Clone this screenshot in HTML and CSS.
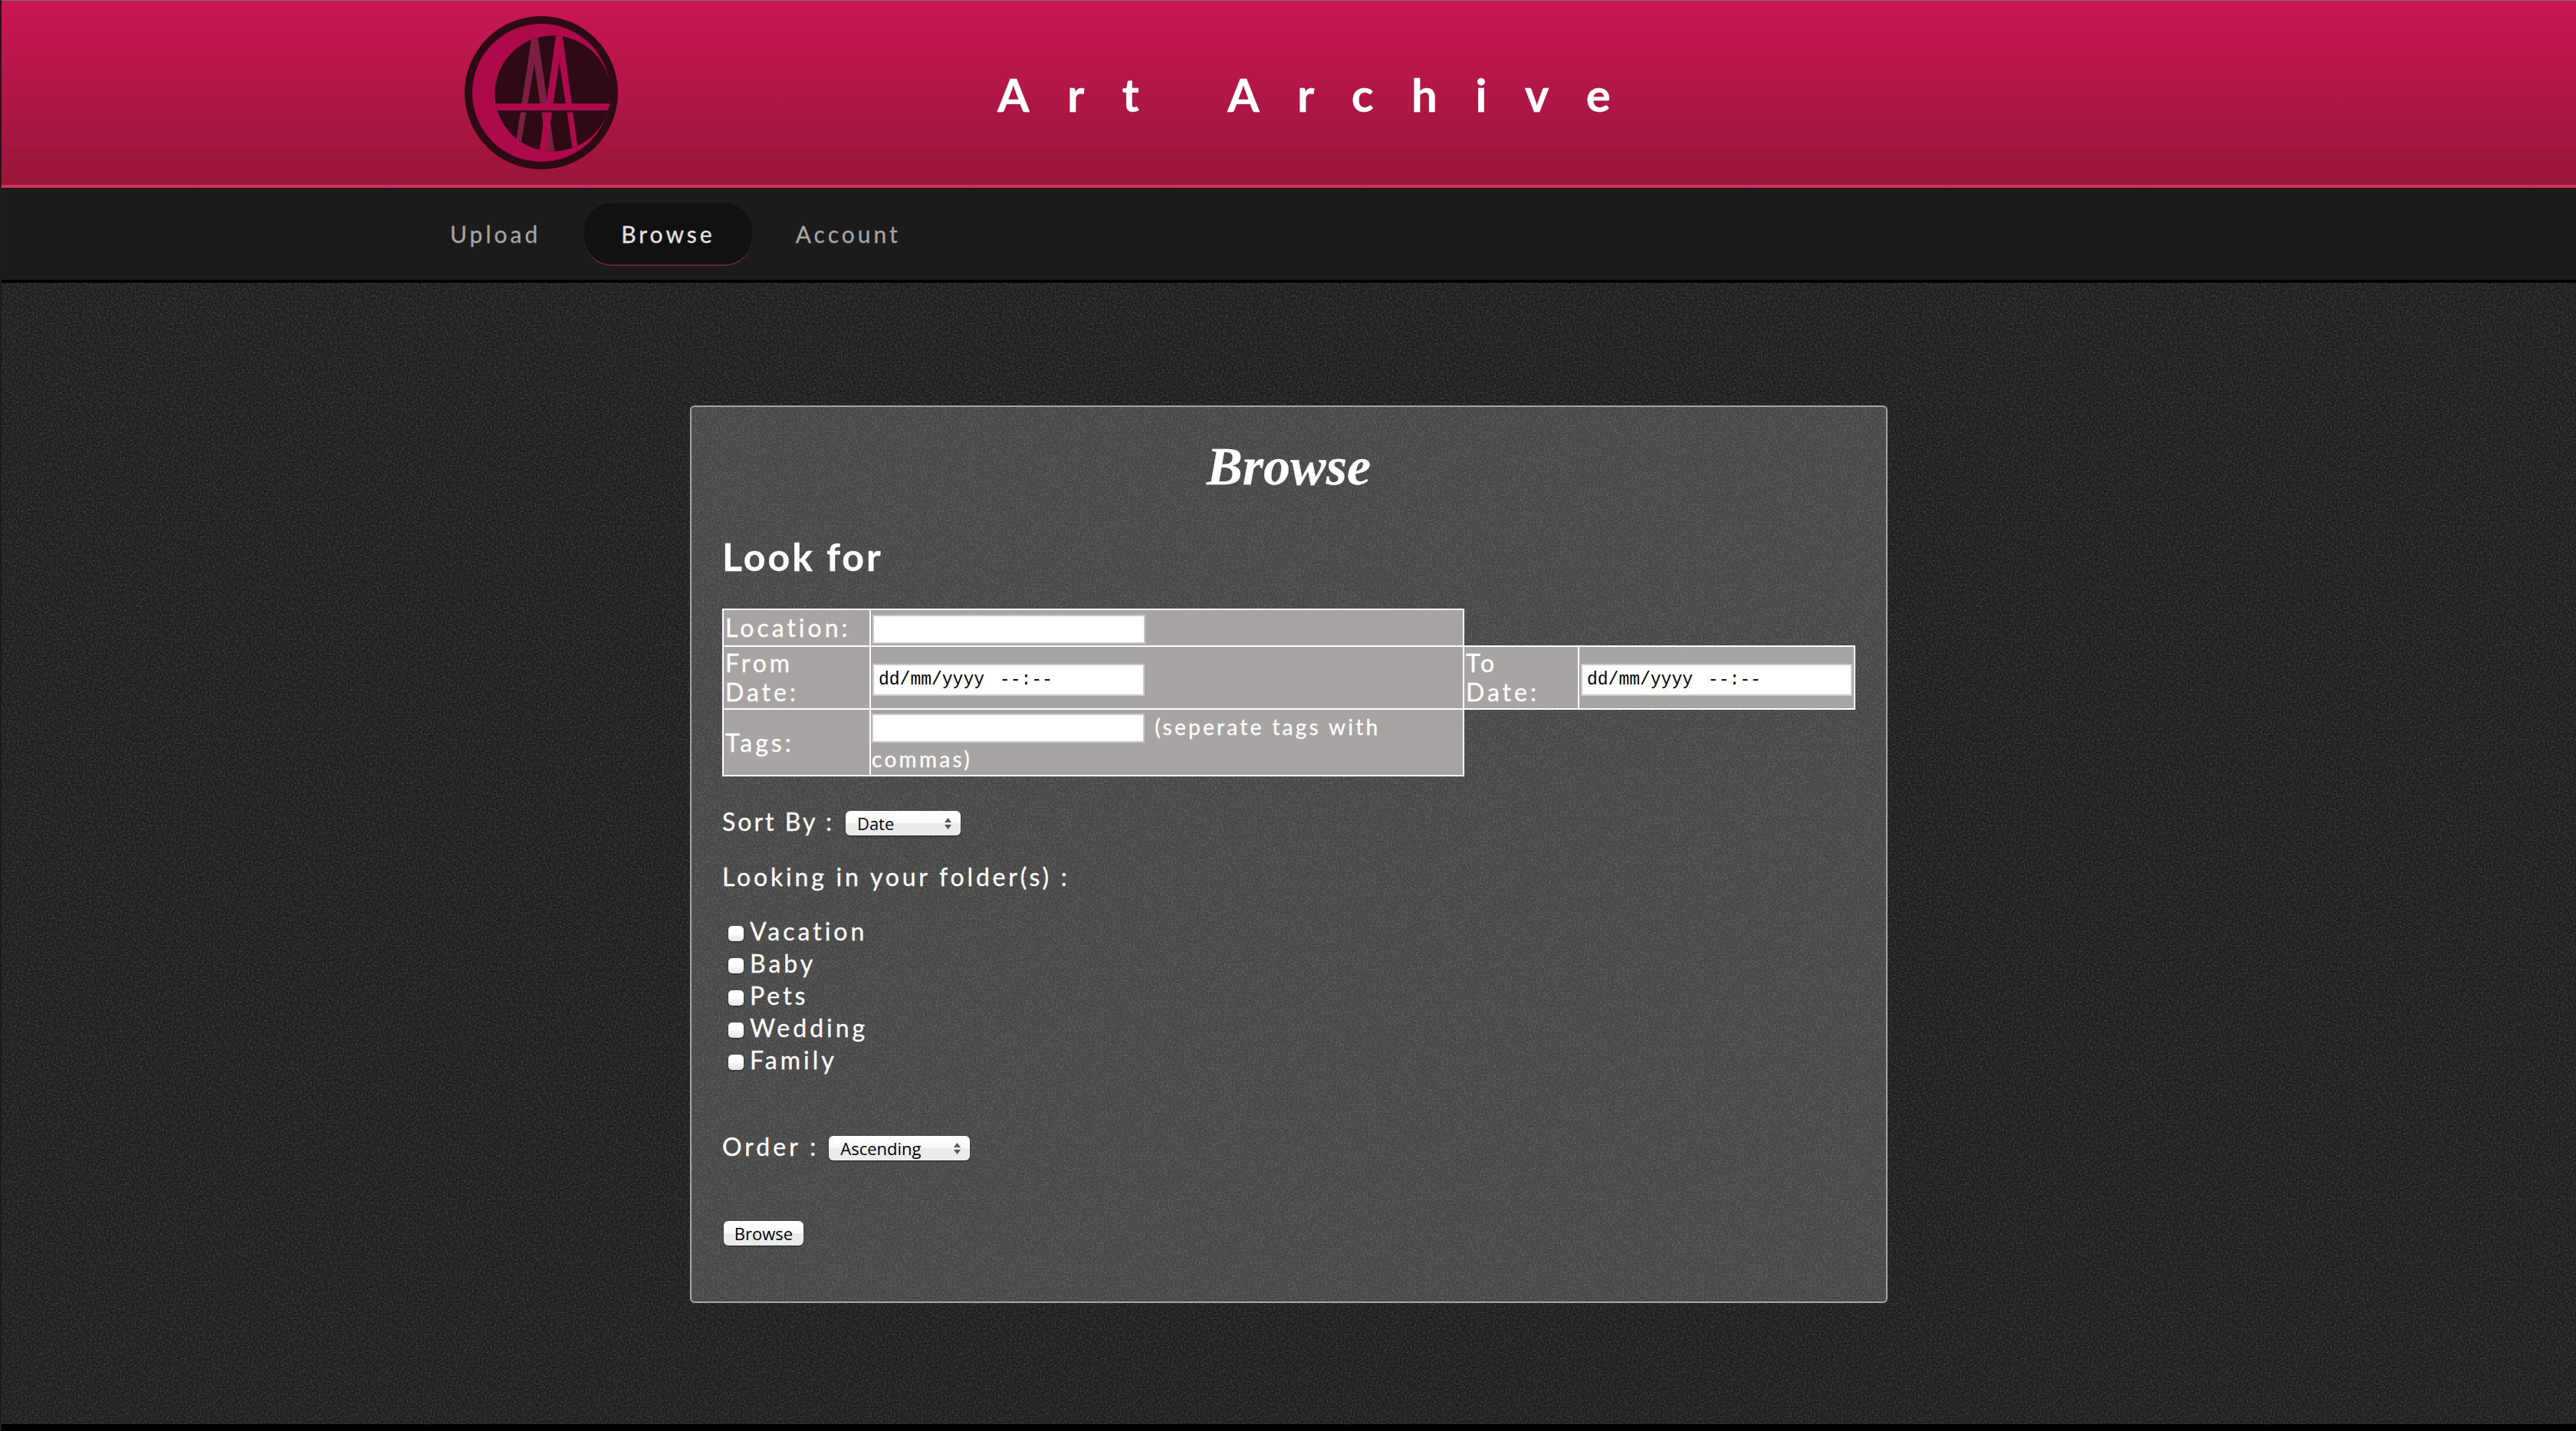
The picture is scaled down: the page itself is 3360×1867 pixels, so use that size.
FILE: index.html
```html
<!DOCTYPE html>
<html lang="en">
<head>
<meta charset="utf-8">
<title>Art Archive</title>
<link rel="stylesheet" href="styles.css">
</head>
<body>
<header class="banner">
  <div class="banner-inner">
    <svg class="logo" viewBox="0 0 200 200" aria-hidden="true">
      <defs><clipPath id="inner"><circle cx="115" cy="101" r="75.5"/></clipPath></defs>
      <circle cx="100" cy="100" r="100" fill="#2e0b14"/>
      <circle cx="100" cy="100" r="90" fill="#ad0a4b"/>
      <circle cx="115" cy="101" r="75.5" fill="#2e0b14"/>
      <g clip-path="url(#inner)">
        <path d="M88 24 L95 24 L118 180 L108 180 L91 62 L74 164 L67 164 Z" fill="#7a1f42"/>
        <path d="M120 20 L127 20 L148 175 L141 175 L123.500 60 L106 180 L97 180 Z" fill="#ad0a4b"/>
        <rect x="38" y="114" width="155" height="9" fill="#ad0a4b"/>
        <rect x="38" y="123" width="155" height="2.500" fill="#2e0b14"/>
      </g>
    </svg>
    <h1 class="site-title">Art Archive</h1>
  </div>
</header>
<nav class="nav">
  <a class="nav-link" href="#">Upload</a>
  <a class="nav-link is-active" href="#">Browse</a>
  <a class="nav-link" href="#">Account</a>
</nav>
<main class="page">
  <section class="panel">
    <h2 class="panel-title">Browse</h2>
    <h3 class="section-title">Look for</h3>
    <form class="search">
      <table class="fields">
        <colgroup><col class="col-a"><col class="col-b"><col class="col-c"><col class="col-d"></colgroup>
        <tr class="row-location">
          <td>Location:</td>
          <td><input class="text-input" type="text"></td>
        </tr>
        <tr class="row-dates">
          <td>From<br>Date:</td>
          <td><input class="date-input" type="text" value="dd/mm/yyyy --:--"></td>
          <td>To<br>Date:</td>
          <td><input class="date-input date-wide" type="text" value="dd/mm/yyyy --:--"></td>
        </tr>
        <tr class="row-tags">
          <td>Tags:</td>
          <td class="tags-cell"><input class="text-input" type="text"> <span class="hint">(seperate tags with commas)</span></td>
        </tr>
      </table>

      <div class="sort-row">
        <label class="field-label" for="sort">Sort By :</label>
        <span class="select-wrap sort-select">
          <select id="sort" class="select"><option>Date</option></select>
          <svg class="select-arrows" viewBox="0 0 9 15" aria-hidden="true"><path d="M4.500 0 L9 6 L0 6 Z M0 9 L9 9 L4.500 15 Z"/></svg>
        </span>
      </div>

      <p class="field-label folders-label">Looking in your folder(s) :</p>
      <ul class="folders">
        <li><input class="check" type="checkbox">Vacation</li>
        <li><input class="check" type="checkbox">Baby</li>
        <li><input class="check" type="checkbox">Pets</li>
        <li><input class="check" type="checkbox">Wedding</li>
        <li><input class="check" type="checkbox">Family</li>
      </ul>

      <div class="order-row">
        <label class="field-label order-label" for="order">Order :</label>
        <span class="select-wrap order-select">
          <select id="order" class="select"><option>Ascending</option></select>
          <svg class="select-arrows" viewBox="0 0 9 15" aria-hidden="true"><path d="M4.500 0 L9 6 L0 6 Z M0 9 L9 9 L4.500 15 Z"/></svg>
        </span>
      </div>

      <button class="submit" type="button">Browse</button>
    </form>
  </section>
</main>
<footer class="foot"></footer>
</body>
</html>
```
FILE: styles.css
```css
* { box-sizing: border-box; }
html, body { margin: 0; padding: 0; }
body {
  width: 3360px;
  height: 1867px;
  overflow: hidden;
  display: flex;
  flex-direction: column;
  font-family: "Lato", sans-serif;
  color: #fff;
  background: #000;
  border-left: 2px solid #1c1c1c;
  -webkit-text-stroke: 0.3px currentColor;
}
.banner {
  height: 245px;
  flex: none;
  border-top: 1px solid #777;
  border-bottom: 4px solid #d23058;
  background: linear-gradient(#c91853, #991639);
}
.banner-inner {
  position: relative;
  height: 100%;
  padding-left: 604px;
  display: flex;
}
.logo { width: 200px; height: 200px; margin-top: 20px; flex: none; }
.site-title {
  margin: 0;
  position: absolute;
  left: 1299px;
  top: 86px;
  font-size: 60px;
  line-height: 72px;
  font-weight: 700;
  letter-spacing: 49.300px;
  word-spacing: 4px;
  white-space: pre;
}
.nav {
  height: 124px;
  flex: none;
  background: #1b1b1b;
  border-bottom: 4px solid #000;
  display: flex;
  align-items: flex-start;
  gap: 10px;
  padding: 20px 0 0 538px;
}
.nav-link {
  height: 82px;
  padding: 0 47px;
  border-radius: 36px;
  font-size: 30px;
  line-height: 80px;
  letter-spacing: 4px;
  color: #a8a4a4;
  text-decoration: none;
}
.is-active {
  padding: 0 48px;
  background: #111;
  color: #e6e2e2;
  border-bottom: 2px solid #6a2440;
}
.page {
  flex: none;
  height: 1489px;
  padding-top: 160px;
  background-color: #1f1f1f;
  background-image: url("data:image/svg+xml,%3Csvg xmlns='http://www.w3.org/2000/svg' width='300' height='300'%3E%3Cfilter id='n' x='0' y='0' width='100%25' height='100%25'%3E%3CfeTurbulence type='fractalNoise' baseFrequency='.42' numOctaves='2' seed='4' stitchTiles='stitch'/%3E%3CfeColorMatrix values='0 0 0 0 1 0 0 0 0 1 0 0 0 0 1 1.6 0 0 0 -.62'/%3E%3C/filter%3E%3Crect width='300' height='300' filter='url(%23n)' opacity='.18'/%3E%3C/svg%3E");
}
.panel {
  width: 1562px;
  height: 1171px;
  margin-left: 898px;
  padding: 0 40px;
  border: 2px solid #a8a4a4;
  border-radius: 6px;
  background-color: rgba(255, 255, 255, 0.18);
}
.panel-title {
  margin: 0;
  padding-top: 36px;
  text-align: center;
  font-family: "Liberation Serif", serif;
  font-style: italic;
  font-weight: 700;
  font-size: 70px;
  line-height: 84px;
}
.section-title {
  margin: 0;
  padding-top: 45px;
  font-size: 50px;
  line-height: 60px;
  font-weight: 700;
  letter-spacing: 3px;
}
.fields {
  margin-top: 38px;
  border-collapse: collapse;
  table-layout: fixed;
  width: 1476px;
  font-size: 32px;
  line-height: 38px;
  letter-spacing: 4px;
}
.col-a { width: 192px; }
.col-b { width: 774px; }
.col-c { width: 150px; }
.col-d { width: 360px; }
.fields td {
  padding: 1px 2px;
  background: #a8a4a4;
  border: 2px solid #fff;
  color: #fff;
  vertical-align: middle;
}
.row-location td { height: 48px; }
.row-dates td { height: 82px; }
.row-tags td { height: 87px; }
.fields .tags-cell { padding: 0 1px; line-height: 39px; }
.text-input, .date-input {
  border: 2px solid #c9c9c9;
  background: #fff;
  padding: 0;
  margin: 0;
  vertical-align: middle;
  outline: none;
  -webkit-text-stroke: 0;
}
.text-input { width: 356px; height: 38px; }
.date-input {
  width: 355px;
  height: 42px;
  margin-top: 6px;
  padding-left: 6px;
  font-family: "Liberation Mono", monospace;
  font-size: 23px;
  word-spacing: 6px;
  color: #000;
}
.date-wide { width: 354px; }
.hint { font-size: 28px; letter-spacing: 3.300px; margin-left: 1px; }
.sort-row, .order-row { display: flex; align-items: center; }
.sort-row { margin-top: 39px; height: 40px; }
.field-label { font-size: 32px; line-height: 40px; letter-spacing: 3px; }
.select-wrap { position: relative; display: block; height: 32px; margin: 4px 0 0 15px; }
.sort-select { width: 150px; }
.order-select { width: 184px; margin-left: 13px; }
.select {
  appearance: none;
  display: block;
  width: 100%;
  height: 32px;
  padding: 0 0 0 15px;
  border: 0;
  border-radius: 6px;
  background: linear-gradient(#fff 0%, #f8f8f8 50%, #ebebeb 52%, #ebebeb 100%);
  box-shadow: 0 1px 2px rgba(0, 0, 0, 0.6);
  font-family: "Open Sans", sans-serif;
  font-size: 22px;
  color: #000;
  -webkit-text-stroke: 0;
}
.select-arrows { position: absolute; right: 12px; top: 9px; width: 9px; height: 15px; fill: #555; }
.folders-label { margin: 32px 0 0; letter-spacing: 3.800px; }
.folders { list-style: none; margin: 30px 0 0; padding: 0; font-size: 32px; line-height: 42px; letter-spacing: 4px; }
.folders li { display: flex; align-items: center; height: 42px; }
.check {
  appearance: none;
  width: 20px;
  height: 20px;
  margin: 6px 8px 0 8px;
  border-radius: 5px;
  background: linear-gradient(#fff 0%, #fff 45%, #e4e4e4 100%);
  box-shadow: 0 1px 2px rgba(0, 0, 0, 0.6);
}
.order-row { margin-top: 72px; height: 40px; }
.order-label { letter-spacing: 4px; }
.submit {
  appearance: none;
  display: block;
  width: 104px;
  height: 32px;
  margin: 77px 0 0 2px;
  padding: 0;
  border: 0;
  border-radius: 6px;
  background: linear-gradient(#fff 0%, #fafafa 50%, #ebebeb 52%, #ebebeb 100%);
  box-shadow: 0 1px 2px rgba(0, 0, 0, 0.6);
  font-family: "Open Sans", sans-serif;
  font-size: 22px;
  color: #000;
  -webkit-text-stroke: 0;
}
.foot { flex: 1; background: #000; }
```
